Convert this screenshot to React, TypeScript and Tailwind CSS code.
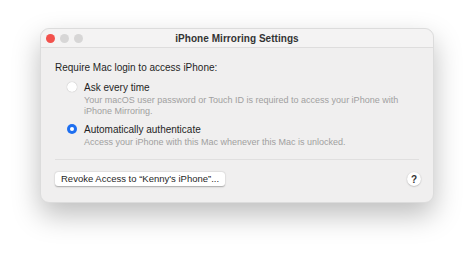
export default function App() {
  return (
    <div className="w-[474px] h-[255px] bg-white pt-[28px] pl-[40px] font-['Liberation_Sans',Arial,sans-serif]">
      <div className="w-[394px] h-[175px] rounded-[9px] bg-[#f0efef] border border-[#dcdcdc] shadow-[0_12px_28px_rgba(0,0,0,0.26)] flex flex-col">
        {/* Title bar */}
        <div className="relative h-[19px] flex items-center justify-center border-b border-[#dedddd] bg-[#f4f3f3] rounded-t-[9px]">
          <div className="absolute left-[5px] top-[5px] flex gap-[5px]">
            <span className="w-[9px] h-[9px] rounded-full bg-[#f2514c]" />
            <span className="w-[9px] h-[9px] rounded-full bg-[#d7d6d6]" />
            <span className="w-[9px] h-[9px] rounded-full bg-[#d7d6d6]" />
          </div>
          <span className="text-[10px] font-bold text-[#333] tracking-[0.05px]">iPhone Mirroring Settings</span>
        </div>

        {/* Body */}
        <div className="flex flex-col px-[14px] pt-[13px]">
          <div className="text-[10px] leading-[14px] text-[#1f1f1f]">Require Mac login to access iPhone:</div>

          <div className="flex flex-col pl-[12px] mt-[5px]">
            <div className="flex items-center gap-[7px] h-[14px]">
              <span className="w-[10px] h-[10px] rounded-full bg-white shadow-[0_0_1px_rgba(0,0,0,0.35)]" />
              <span className="text-[10px] text-[#1f1f1f]">Ask every time</span>
            </div>
            <div className="pl-[17px] mt-[1px] text-[9px] leading-[11px] text-[#a0a0a0]">
              Your macOS user password or Touch ID is required to access your iPhone with
              <br />
              iPhone Mirroring.
            </div>

            <div className="flex items-center gap-[7px] h-[14px] mt-[5px]">
              <span className="w-[10px] h-[10px] rounded-full bg-[#1e6ff0] flex items-center justify-center">
                <span className="w-[4px] h-[4px] rounded-full bg-white" />
              </span>
              <span className="text-[10px] text-[#1f1f1f]">Automatically authenticate</span>
            </div>
            <div className="pl-[17px] mt-[1px] text-[9px] leading-[11px] text-[#a0a0a0]">
              Access your iPhone with this Mac whenever this Mac is unlocked.
            </div>
          </div>

          <div className="h-px bg-[#e0dfdf] mt-[11px]" />

          <div className="flex items-center justify-between mt-[12px]">
            <button className="h-[14px] px-[6px] rounded-[3px] bg-white shadow-[0_0.5px_1.5px_rgba(0,0,0,0.3)] text-[9.5px] leading-[14px] text-[#1f1f1f]">
              Revoke Access to “Kenny's iPhone”...
            </button>
            <button className="w-[14px] h-[14px] rounded-full bg-white shadow-[0_0.5px_1.5px_rgba(0,0,0,0.3)] text-[10px] font-bold text-[#333] flex items-center justify-center mr-[-2px]">
              ?
            </button>
          </div>
        </div>
      </div>
    </div>
  );
}
